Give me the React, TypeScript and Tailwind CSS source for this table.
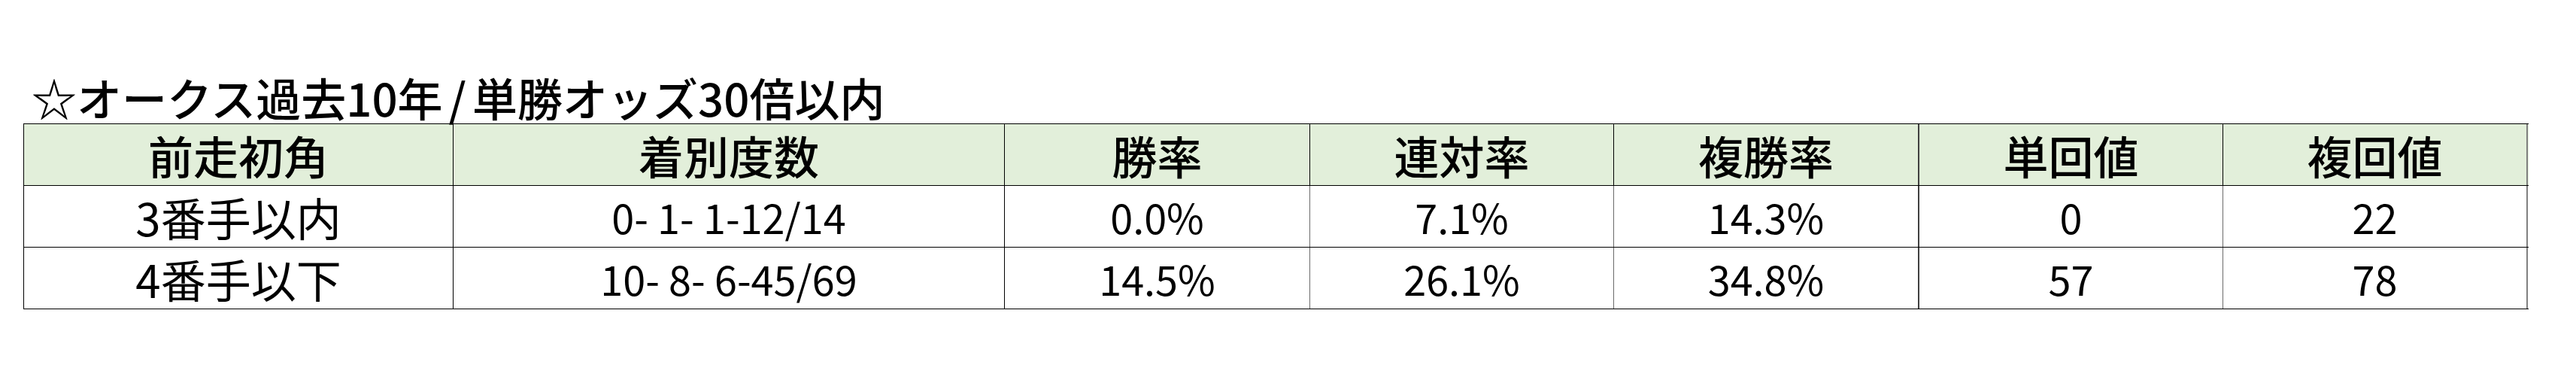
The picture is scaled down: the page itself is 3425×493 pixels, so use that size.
import React from "react";

const cols = ["前走初角", "着別度数", "勝率", "連対率", "複勝率", "単回値", "複回値"];
const rows = [
  ["3番手以内", "0- 1- 1-12/14", "0.0%", "7.1%", "14.3%", "0", "22"],
  ["4番手以下", "10- 8- 6-45/69", "14.5%", "26.1%", "34.8%", "57", "78"],
];

const headBorders = [
  "border-r border-black",
  "border-r border-black",
  "border-r border-black",
  "border-r border-black",
  "border-r-2 border-[#404040]",
  "border-r border-black",
  "border-r-2 border-[#808080]",
];
const bodyBorders = [
  "border-r border-black",
  "border-r border-black",
  "border-r border-[#6b6b6b]",
  "border-r border-[#6b6b6b]",
  "border-r-2 border-[#404040]",
  "border-r border-[#6b6b6b]",
  "border-r-2 border-[#808080]",
];

export default function App() {
  return (
    <div
      className="w-[3425px] h-[493px] bg-white text-black pt-[99px] pl-[31px]"
      style={{ fontFamily: '"Noto Sans CJK JP", "Noto Sans", sans-serif' }}
    >
      <div className="h-[59px] leading-[59px] text-[60px] font-medium pl-[11px] whitespace-nowrap">
        ☆オークス過去10年<span className="mx-[8px]">/</span>単勝オッズ30倍以内
      </div>
      <div className="mt-[6px] w-[3331px] border-l border-t border-black">
        <div className="grid grid-cols-[571px_733px_406px_404px_406px_404px_405px] h-[82px] bg-[#e2efda] border-b border-black">
          {cols.map((c, i) => (
            <div
              key={c}
              className={`flex items-center justify-center text-[60px] font-medium leading-none ${headBorders[i]}`}
            >
              {c}
            </div>
          ))}
        </div>
        {rows.map((r, ri) => (
          <div
            key={ri}
            className="grid grid-cols-[571px_733px_406px_404px_406px_404px_405px] h-[82px] border-b border-black bg-white"
          >
            {r.map((v, i) => (
              <div
                key={i}
                className={`flex items-center justify-center leading-none ${
                  i === 0 ? "text-[60px]" : "text-[54px]"
                } ${bodyBorders[i]}`}
              >
                {v}
              </div>
            ))}
          </div>
        ))}
      </div>
    </div>
  );
}
